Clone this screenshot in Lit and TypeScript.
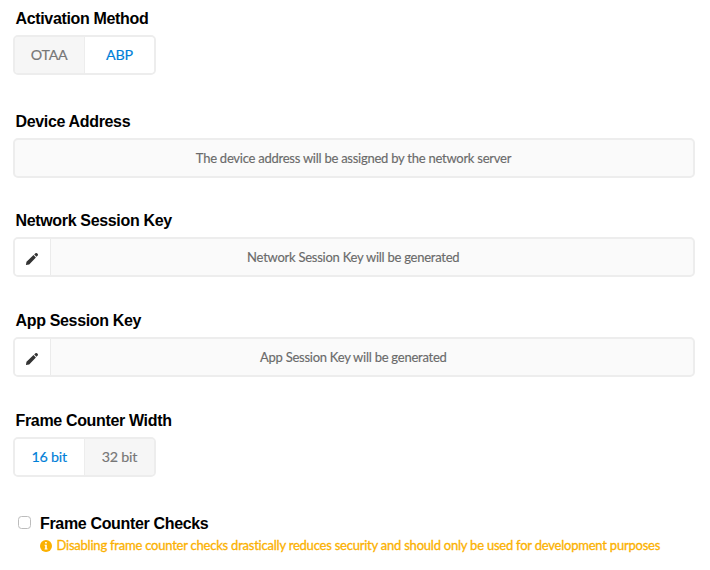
import { LitElement, html, css } from "lit";
import { customElement } from "lit/decorators.js";

const pencil = html`<svg class="pencil" viewBox="0 0 14 14">
  <path d="M.9 13.1 L1.5 9.8 L8.5 3.1 L10.9 5.5 L4.2 12.4 Z M9.2 2.5 L10.4 1.3 Q11.3 .6 12.1 1.3 L12.7 1.9 Q13.4 2.7 12.7 3.6 L11.5 4.8 Z" />
</svg>`;

const info = html`<svg class="info" viewBox="0 0 12 12">
  <circle cx="6" cy="6" r="6" fill="#fbb100" />
  <path d="M5.1 2.1 h1.7 v1.5 h-1.7 Z M4.6 4.7 h2.2 v3.7 h.7 v1 h-2.9 v-1 h.6 v-2.7 h-.6 Z" fill="#fff" />
</svg>`;

@customElement("app-root")
export class AppRoot extends LitElement {
  static styles = css`
    :host { display: block; height: 570px; background: #fff; overflow: hidden; }
    .form { padding: 9px 15.5px 0 12.5px; }
    .group { height: 100px; }
    .group.first { height: 103px; }
    .group.address { height: 99px; }
    .group.last { height: 103px; }
    .label { font: bold 16px/20px "Liberation Sans", Arial, sans-serif; letter-spacing: -.34px; color: #000; padding-left: 3px; height: 26px; white-space: nowrap; }
    .box { box-sizing: border-box; height: 40px; border: 2px solid #ededed; border-radius: 5px; background: #fafafa; display: flex; overflow: hidden; font: 13px/36px Lato, sans-serif; letter-spacing: -.25px; color: #6a6a6a; -webkit-text-stroke: .15px; }
    .text { flex: 1; text-align: center; white-space: nowrap; }
    .edit { box-sizing: border-box; width: 36.5px; background: #fff; border-right: 1px solid #ebebeb; display: flex; align-items: center; justify-content: center; }
    .edit + .text { padding-right: 37px; }
    .pencil { width: 14px; height: 14px; fill: #333; margin-top: 3px; }
    .toggle { width: 143.5px; font-size: 14.3px; }
    .option { flex: 1; text-align: center; background: #f6f6f6; color: #777; }
    .option + .option { border-left: 1px solid #ededed; }
    .option.on { background: #fff; color: #0080d8; }
    .check { display: flex; height: 21px; }
    .square { box-sizing: border-box; width: 13px; height: 13px; border: 1px solid #bcbcbc; border-radius: 3.5px; margin: 2px 6px 0 5.5px; }
    .warn { display: flex; align-items: center; font: 13px/20px Lato, sans-serif; letter-spacing: -.225px; color: #fbb100; -webkit-text-stroke: .3px; padding-left: 27.5px; gap: 4.5px; white-space: nowrap; }
    .info { width: 12px; height: 12px; margin-top: 1px; }
  `;
  render() {
    return html`<div class="form">
      <div class="group first"><div class="label">Activation Method</div>
        <div class="box toggle"><span class="option">OTAA</span><span class="option on">ABP</span></div></div>
      <div class="group address"><div class="label">Device Address</div>
        <div class="box"><span class="text">The device address will be assigned by the network server</span></div></div>
      <div class="group"><div class="label">Network Session Key</div>
        <div class="box"><span class="edit">${pencil}</span><span class="text">Network Session Key will be generated</span></div></div>
      <div class="group"><div class="label">App Session Key</div>
        <div class="box"><span class="edit">${pencil}</span><span class="text">App Session Key will be generated</span></div></div>
      <div class="group last"><div class="label">Frame Counter Width</div>
        <div class="box toggle"><span class="option on">16 bit</span><span class="option">32 bit</span></div></div>
      <div class="check"><span class="square"></span><div class="label">Frame Counter Checks</div></div>
      <div class="warn">${info}<span>Disabling frame counter checks drastically reduces security and should only be used for development purposes</span></div>
    </div>`;
  }
}
